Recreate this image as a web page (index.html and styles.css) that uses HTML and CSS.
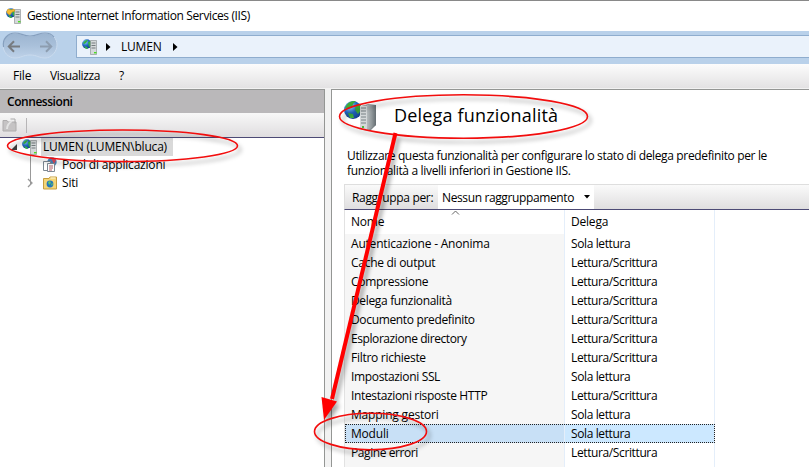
FILE: index.html
```html
<!DOCTYPE html>
<html lang="it">
<head>
<meta charset="utf-8">
<title>Gestione Internet Information Services (IIS)</title>
<link rel="stylesheet" href="styles.css">
</head>
<body>
<svg class="defs" width="0" height="0">
  <defs>
    <radialGradient id="globe" cx="35%" cy="30%" r="75%"><stop offset="0" stop-color="#8fd4ff"/><stop offset=".5" stop-color="#2369c4"/><stop offset="1" stop-color="#123b86"/></radialGradient>
    <linearGradient id="metal"><stop offset="0" stop-color="#b5bbbd"/><stop offset=".5" stop-color="#92999c"/><stop offset="1" stop-color="#656e72"/></linearGradient>
    <symbol id="server" viewBox="0 0 16 16">
      <circle cx="4.8" cy="5" r="4.7" fill="url(#globe)"/>
      <path d="M1 4Q3 .5 6 1L4 4 2 5ZM6 3l3-1 1 4-3 2ZM2 7l3 1 1 2-2 0Z" fill="#35b445"/>
      <path d="M8.5 1.5h6v14h-6z" fill="#d5d9da" stroke="#84898b" stroke-width=".6"/>
      <path d="M9.5 4h4M9.5 6.5h4M9.5 9h4" stroke="#697175" stroke-width=".9"/>
      <path d="M12 13h2.5v1.4h-2.5z" fill="#4bdc21"/>
    </symbol>
  </defs>
</svg>
<div class="window">
  <header class="titlebar">
    <svg class="app-icon" viewBox="0 0 16 16"><use href="#server"/><path d="M.5 4 2 1l3 1 3-1 1 2-3 1-2 3-2-1Z" fill="#f5bd31" stroke="#d69014" stroke-width=".5"/></svg>
    <span class="t-title">Gestione Internet Information Services (IIS)</span>
  </header>
  <div class="address-band">
    <svg class="nav" width="58" height="30" viewBox="0 0 58 30">
      <defs><linearGradient id="nav" x2="0" y2="1"><stop offset="0" stop-color="#9bb4d0"/><stop offset=".5" stop-color="#a9c0da"/><stop offset="1" stop-color="#bed2e9"/></linearGradient></defs>
      <path d="M14 2C20 2 22 5 29 5S38 2 44 2C52 2 56 8 56 14S51 27 44 27C38 27 36 24 29 24S20 27 14 27C7 27 2 21 2 14S7 2 14 2Z" fill="url(#nav)" stroke="#cadbee"/>
      <path d="M2.5 16C1 8 7 2 14 2 20 2 22 5 29 5S38 2 44 2q6 0 9 4" fill="none" stroke="#859fbe" stroke-width="1.2"/>
      <path d="M19 15.500H8M13 10.300 7.800 15.500 13 20.700" fill="none" stroke="#777b80" stroke-width="2"/>
      <path d="M39 15.500h11M45 10.300 50.200 15.500 45 20.700" fill="none" stroke="#8d9db0" stroke-width="2"/>
    </svg>
    <div class="address">
      <svg width="16" height="16"><use href="#server"/></svg>
      <svg class="tri" width="5" height="8"><path d="M0 0 4.5 4 0 8Z"/></svg>
      <span class="t-host">LUMEN</span>
      <svg class="tri" width="5" height="8"><path d="M0 0 4.5 4 0 8Z"/></svg>
    </div>
  </div>
  <nav class="menu"><span class="m-file">File</span><span class="m-view">Visualizza</span><span>?</span></nav>
  <main class="panes">
    <aside class="connections">
      <h2 class="pane-title">Connessioni</h2>
      <div class="tools">
        <svg width="16" height="16" viewBox="0 0 16 16"><path d="M1 3.500h4l1 1.500h8v9H1z" fill="#c5c3c4" stroke="#aeacad"/><path d="M5 12Q5 7 10 4" fill="none" stroke="#e3e3e3" stroke-width="2"/><path d="M8.500 2h4.500v4.500" fill="none" stroke="#aaa"/></svg>
        <i class="separator"></i>
      </div>
      <div class="tree">
        <div class="node root">
          <svg class="expander" width="8" height="8"><path d="M7 1v6H1Z" fill="#404040"/></svg>
          <svg class="node-icon" width="16" height="16"><use href="#server"/></svg>
          <span class="selected t-root">LUMEN (LUMEN\bluca)</span>
        </div>
        <div class="node child pool">
          <svg width="16" height="16" viewBox="0 0 16 16"><circle cx="10" cy="5" r="4.7" fill="#4984bd"/><path d="M9 1l5 2-2 4z" fill="#dc4857"/><path d="M1.5 4.5h7v9h-7z" fill="#fff" stroke="#7e8994"/><path d="M5.5 6.5h7v8h-7z" fill="#fff" stroke="#7e8994"/><path d="M7 9h4M7 11h4M7 13h3" stroke="#b45c67"/></svg>
          <span class="t-pool">Pool di applicazioni</span>
        </div>
        <div class="node child sites">
          <svg class="closed" width="6" height="10"><path d="M1 1l4 4-4 4" fill="none" stroke="#999" stroke-width="1.3"/></svg>
          <svg width="16" height="16" viewBox="0 0 16 16"><path d="M1.5 3.5V14h13V2H8L7 3.5z" fill="#f4d577" stroke="#c79d3e"/><path d="M8.5 3h5" stroke="#fff8d8"/><circle cx="8" cy="9" r="3.4" fill="#2476bd"/><path d="M6 7l2-1 1 2-2 2zM9 9l2-1-1 3z" fill="#63c85e"/></svg>
          <span class="t-sites">Siti</span>
        </div>
      </div>
    </aside>
    <section class="feature">
      <div class="feature-head">
        <svg width="34" height="34" viewBox="0 0 34 34"><circle cx="9" cy="10" r="9" fill="url(#globe)"/><path d="M1 8Q4 0 12 1L9 4 8 8 3 9zM12 5l4-1 2 5-4 5-3-4zM4 13l5 1 1 4-4 0z" fill="#3cac3b"/><path d="M16 6 24 4 32 5V25L26 31 16 29Z" fill="url(#metal)"/><path d="M16 6h7v25l-7-2z" fill="#d5d9da"/><path d="M17 8h5M17 11h5M17 14h5M17 17h5M17 20h5M17 23h5" stroke="#798286"/><path d="M23 5h9v20l-9 6z" fill="url(#metal)"/><path d="M18 26h2v2h-2z" fill="#50b940"/></svg>
        <h1>Delega funzionalità</h1>
      </div>
      <p><span class="t-p1">Utilizzare questa funzionalità per configurare lo stato di delega predefinito per le</span><br><span class="t-p2">funzionalità a livelli inferiori in Gestione IIS.</span></p>
      <div class="groupbar">
        <span class="t-group">Raggruppa per:</span>
        <div class="select"><span class="t-none">Nessun raggruppamento</span><svg width="6" height="4"><path d="M0 0h6L3 3.5Z"/></svg></div>
      </div>
      <div class="list">
        <svg class="sort" width="9" height="5"><path d="M1 4.5 4.5 1 8 4.5" fill="none" stroke="#666"/></svg>
        <div class="row head"><span>Nome</span><span>Delega</span></div>
        <div class="row"><span class="r1">Autenticazione - Anonima</span><span class="ro">Sola lettura</span></div>
        <div class="row"><span class="r2">Cache di output</span><span class="rw">Lettura/Scrittura</span></div>
        <div class="row"><span class="r3">Compressione</span><span class="rw">Lettura/Scrittura</span></div>
        <div class="row"><span class="r4">Delega funzionalità</span><span class="rw">Lettura/Scrittura</span></div>
        <div class="row"><span class="r5">Documento predefinito</span><span class="rw">Lettura/Scrittura</span></div>
        <div class="row"><span class="r6">Esplorazione directory</span><span class="rw">Lettura/Scrittura</span></div>
        <div class="row"><span class="r7">Filtro richieste</span><span class="rw">Lettura/Scrittura</span></div>
        <div class="row"><span class="r8">Impostazioni SSL</span><span class="ro">Sola lettura</span></div>
        <div class="row"><span class="r9">Intestazioni risposte HTTP</span><span class="rw">Lettura/Scrittura</span></div>
        <div class="row"><span class="r10">Mapping gestori</span><span class="ro">Sola lettura</span></div>
        <div class="row active"><span class="r11">Moduli</span><span class="ro">Sola lettura</span></div>
        <div class="row"><span class="r12">Pagine errori</span><span class="rw">Lettura/Scrittura</span></div>
        <div class="row filler"><span></span><span></span></div>
      </div>
    </section>
  </main>
</div>
<svg class="annotations" width="809" height="467" viewBox="0 0 809 467">
  <g fill="none" stroke="#f20d0d" stroke-width="1.6">
    <ellipse cx="122.5" cy="145.8" rx="115" ry="15.8"/>
    <ellipse cx="463.5" cy="116.5" rx="124" ry="21.7"/>
    <ellipse cx="370.5" cy="431.5" rx="56" ry="18.2"/>
  </g>
  <path d="M395.500 133 332 399" stroke="#f00" stroke-width="4"/>
  <path d="M321.5 397 337 401.5 324 420Z" fill="#f00"/>
</svg>
</body>
</html>
```
FILE: styles.css
```css
* { box-sizing: border-box; }
body { margin: 0; font: 12px/18px "Open Sans", "Noto Sans", sans-serif; color: #000; letter-spacing: -0.2px; overflow: hidden; }
svg { display: block; flex: none; }
.defs { position: absolute; }
h1, h2, p { margin: 0; font-weight: 400; }
span { white-space: nowrap; }
.window { height: 467px; display: flex; flex-direction: column; background: #f2f2f2; }
.titlebar { height: 31px; border-top: 1px solid #898989; background: #fff; display: flex; align-items: center; padding-left: 6px; gap: 5px; }
.t-title { letter-spacing: -0.38px; }
.app-icon { width: 16px; height: 16px; }
.address-band { height: 33px; background: #b9d1ea; display: flex; }
.nav { margin: 0 16px 0 1px; }
.address { flex: 1; height: 23px; margin-top: 4px; margin-left: 1px; background: #eaf2fb; border: 1px solid #8fadce; border-right: 0; display: flex; align-items: center; padding-left: 5px; }
.address .tri { margin-left: 8px; }
.address span { margin-left: 10px; width: 44px; }
.menu { height: 24px; background: linear-gradient(#fcfcfc, #e3e2e3); display: flex; padding: 3px 0 0 13px; }
.m-file { width: 37px; }
.m-view { width: 69px; letter-spacing: -0.4px; }
.panes { flex: 1; min-height: 0; margin-top: 1px; display: flex; gap: 6px; }
.connections { width: 325px; background: #fff; border: solid #949694; border-width: 1px 1px 0 0; }
.pane-title { height: 23px; background: #bab8ba; font-size: 12px; font-weight: 600; line-height: 24px; padding-left: 7px; letter-spacing: -0.45px; }
.tools { height: 25px; background: linear-gradient(#f8f8f8, #dfdddf); border-bottom: 1px solid #4c4a75; display: flex; align-items: center; padding-left: 2px; }
.separator { width: 1px; height: 15px; margin-left: 8px; background: #b7b5b7; }
.tree { padding-left: 10px; background: linear-gradient(#999, #999) 30px 18px / 1px 28px no-repeat; }
.node { height: 18px; display: flex; align-items: center; }
.root { gap: 5px; }
.node-icon { margin: 0 -2px 0 -1px; }
.selected { background: #d9d9d9; height: 18px; width: 132px; padding-left: 2px; line-height: 18px; }
.child { padding-left: 32px; gap: 4px; }
.sites { padding-left: 17px; }
.closed { margin-right: 5px; }
.feature { flex: 1; min-width: 0; background: #fff; border: solid #949694; border-width: 1px 0 0 1px; padding-left: 12px; display: flex; flex-direction: column; }
.feature-head { height: 57px; display: flex; padding-top: 10px; }
.feature-head h1 { font-size: 18px; line-height: 31px; margin-left: 16px; letter-spacing: 0.18px; }
.feature p { height: 37px; line-height: 15px; padding: 1px 0 0 3px; }
.t-p1 { letter-spacing: -0.355px; }
.t-p2 { letter-spacing: -0.33px; }
.groupbar { height: 26px; background: linear-gradient(#fafafa, #dfdedf); border-top: 1px solid #dedede; border-left: 1px solid #dedede; border-bottom: 1px solid #4c4a75; display: flex; padding-left: 7px; line-height: 25px; }
.t-group { width: 86px; letter-spacing: -0.34px; }
.select { height: 24px; width: 156px; padding-left: 4px; background: #fff; display: flex; align-items: center; }
.t-none { width: 142px; letter-spacing: -0.38px; }
.list { position: relative; border-left: 1px solid #e2e2e2; flex: 1; overflow: hidden; }
.row { height: 19px; display: flex; line-height: 19px; width: 370px; }
.row span:first-child { width: 220px; padding-left: 6px; background: #f6f6f6; border-right: 1px solid #e4eefa; }
.row span:last-child { width: 150px; padding-left: 6px; border-right: 1px solid #e4eefa; }
.row .rw { letter-spacing: -0.38px; }
.row .ro { letter-spacing: -0.38px; }
.r2, .r3, .r7 { letter-spacing: -0.28px; }
.r4, .r5, .r8, .r9 { letter-spacing: -0.34px; }
.r6 { letter-spacing: -0.42px; }
.r12 { letter-spacing: -0.42px; }
.row.head { height: 24px; line-height: 24px; }
.head span:first-child { background: #fff; }
.row.active { background: #cce8ff; outline: 1px dotted #222; outline-offset: -1px; }
.row.active span:first-child { background: #c8e0f6; }
.sort { position: absolute; left: 106px; top: 0; }
.annotations { position: absolute; left: 0; top: 0; pointer-events: none; filter: drop-shadow(3px 4px 2px rgba(0, 0, 0, .35)); }
```
